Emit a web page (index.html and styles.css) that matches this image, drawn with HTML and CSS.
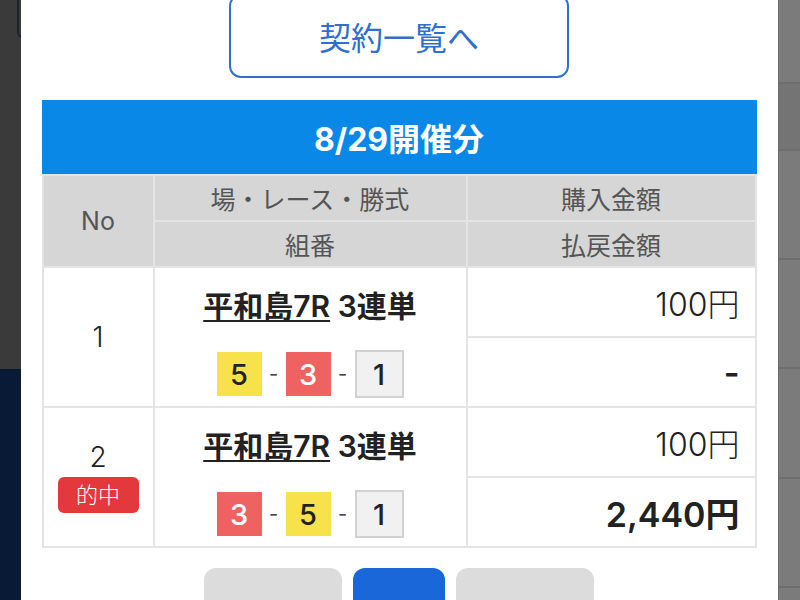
FILE: index.html
```html
<!DOCTYPE html>
<html lang="ja">
<head>
    <meta charset="UTF-8">
    <meta name="viewport" content="width=device-width, initial-scale=1.0">
    <title>投票結果</title>
    <link rel="stylesheet" href="styles.css">
</head>
<body>
    <div class="backdrop-left">
        <div class="backdrop-top"><div class="edge-frame"></div></div>
        <div class="backdrop-bottom"></div>
    </div>

    <div class="modal">
        <a class="btn-outline" href="#">契約一覧へ</a>

        <div class="result">
            <div class="result-title">8/29開催分</div>
            <table class="result-table">
                <colgroup>
                    <col class="col-no">
                    <col class="col-race">
                    <col class="col-amount">
                </colgroup>
                <tr>
                    <th rowspan="2">No</th>
                    <th>場・レース・勝式</th>
                    <th>購入金額</th>
                </tr>
                <tr>
                    <th>組番</th>
                    <th>払戻金額</th>
                </tr>

                <tr>
                    <td class="no" rowspan="2">1</td>
                    <td class="race" rowspan="2">
                        <div class="race-name"><a href="#">平和島7R</a> 3連単</div>
                        <div class="combo">
                            <span class="boat boat-5">5</span>
                            <span class="dash">-</span>
                            <span class="boat boat-3">3</span>
                            <span class="dash">-</span>
                            <span class="boat boat-1">1</span>
                        </div>
                    </td>
                    <td class="amount">100円</td>
                </tr>
                <tr>
                    <td class="amount payout">-</td>
                </tr>

                <tr>
                    <td class="no" rowspan="2">
                        <div>2</div>
                        <span class="hit">的中</span>
                    </td>
                    <td class="race" rowspan="2">
                        <div class="race-name"><a href="#">平和島7R</a> 3連単</div>
                        <div class="combo">
                            <span class="boat boat-3">3</span>
                            <span class="dash">-</span>
                            <span class="boat boat-5">5</span>
                            <span class="dash">-</span>
                            <span class="boat boat-1">1</span>
                        </div>
                    </td>
                    <td class="amount">100円</td>
                </tr>
                <tr>
                    <td class="amount payout">2,440円</td>
                </tr>
            </table>
        </div>

        <div class="pager">
            <span class="pager-btn"></span>
            <span class="pager-btn current"></span>
            <span class="pager-btn"></span>
        </div>
    </div>

    <div class="backdrop-right">
        <div class="strip"></div>
        <div class="strip dark"></div>
        <div class="strip"></div>
        <div class="strip"></div>
        <div class="strip tall"></div>
        <div class="strip"></div>
        <div class="strip last"></div>
    </div>
</body>
</html>
```

FILE: styles.css
```css
body {
    margin: 0;
    height: 100vh;
    overflow: hidden;
    display: flex;
    font-family: Inter, "Noto Sans CJK JP", sans-serif;
    color: #222;
}

/* backdrop behind the modal */
.backdrop-left {
    width: 21px;
    display: flex;
    flex-direction: column;
}
.backdrop-top {
    height: 369px;
    flex-shrink: 0;
    background-color: #3a3a3a;
}
.backdrop-bottom {
    flex: 1;
    background-color: #081a35;
}
.edge-frame {
    width: 6px;
    height: 36px;
    margin-left: 17px;
    border-left: 2px solid #1c2230;
    border-bottom: 2px solid #1c2230;
    border-bottom-left-radius: 6px;
}
.backdrop-right {
    width: 21px;
    display: flex;
    flex-direction: column;
    background-color: #7b7b7b;
    border-left: 1px solid #6a6a6a;
}
.strip {
    height: 107px;
    flex-shrink: 0;
    border-bottom: 2px solid #6d6d6d;
}
.strip:first-child {
    height: 82px;
}
.strip.dark {
    height: 65px;
    background-color: #747474;
}
.strip.tall {
    height: 108px;
}
.strip.last {
    flex: 1;
    border-bottom: none;
}

/* modal */
.modal {
    width: 757px;
    background-color: #fff;
    padding: 0 22px 0 21px;
    box-sizing: border-box;
    display: flex;
    flex-direction: column;
    align-items: center;
}
.modal > * {
    flex-shrink: 0;
}
.btn-outline {
    width: 340px;
    height: 84px;
    margin-top: -6px;
    box-sizing: border-box;
    border: 2px solid #2f6fcd;
    border-radius: 12px;
    display: flex;
    align-items: center;
    justify-content: center;
    color: #2f6fcd;
    font-size: 32px;
    text-decoration: none;
}

.result {
    width: 715px;
    margin-top: 22px;
}
.result-title {
    height: 74px;
    background-color: #0988e8;
    color: #fff;
    font-size: 32px;
    font-weight: bold;
    display: flex;
    align-items: center;
    justify-content: center;
}
.result-table {
    width: 715px;
    table-layout: fixed;
    border-collapse: separate;
    border-spacing: 2px;
    background-color: #e4e4e4;
}
.col-no {
    width: 109px;
}
.col-race {
    width: 311px;
}
.result-table th {
    height: 44px;
    padding: 0;
    background-color: #d6d6d6;
    color: #555;
    font-size: 25px;
    font-weight: normal;
}
.result-table td {
    height: 68px;
    padding: 0;
    background-color: #fff;
}
.no {
    text-align: center;
    font-size: 28px;
    font-weight: 300;
    line-height: 32px;
}
.hit {
    display: inline-flex;
    align-items: center;
    justify-content: center;
    width: 81px;
    height: 36px;
    margin-top: 4px;
    border-radius: 6px;
    background-color: #e4393c;
    color: #fff;
    font-size: 22px;
    line-height: 1;
}
.race {
    vertical-align: top;
    text-align: center;
}
.race-name {
    margin-top: 20px;
    line-height: 36px;
    font-size: 30px;
    font-weight: 600;
}
.race-name a {
    color: #222;
    text-decoration-thickness: 2px;
    text-underline-offset: 3px;
}
.combo {
    margin-top: 26px;
    display: flex;
    align-items: center;
    justify-content: center;
}
.boat {
    width: 45px;
    height: 44px;
    display: flex;
    align-items: center;
    justify-content: center;
    font-size: 29px;
    font-weight: 500;
}
.boat-5 {
    background-color: #f8e24c;
    color: #222;
}
.boat-3 {
    background-color: #ef6262;
    color: #fff;
}
.boat-1 {
    width: 45px;
    height: 44px;
    background-color: #f1f1f1;
    border: 2px solid #d2d2d2;
    color: #222;
}
.dash {
    width: 24px;
    text-align: center;
    font-size: 20px;
    color: #444;
}
.amount {
    text-align: right;
    padding-right: 15px !important;
    font-size: 32px;
    font-weight: 300;
    color: #222;
}
.payout {
    font-size: 34px;
    font-weight: 600;
}

.pager {
    display: flex;
    gap: 11px;
    margin-top: 20px;
}
.pager-btn {
    width: 138px;
    height: 50px;
    border-radius: 12px;
    background-color: #dcdcdc;
}
.pager-btn.current {
    width: 92px;
    background-color: #1967d8;
}
```
